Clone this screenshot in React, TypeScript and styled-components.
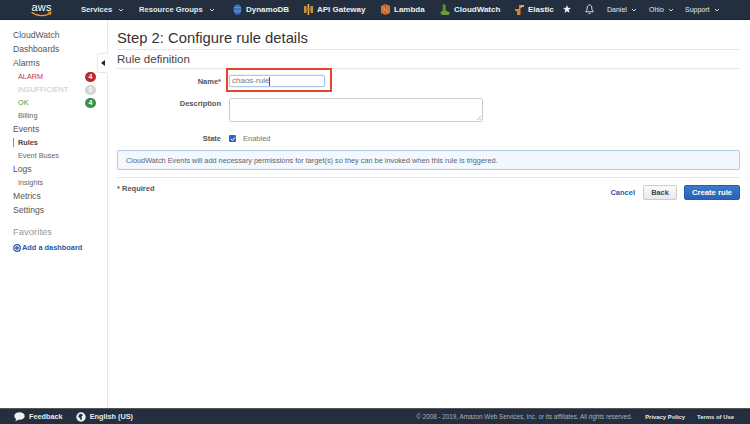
import React from "react";
import styled, { createGlobalStyle } from "styled-components";

const Global = createGlobalStyle`
  html, body { margin: 0; padding: 0; height: 100%; background: #fff; overflow: hidden; }
  body { font-family: "Liberation Sans", Arial, sans-serif; color: #444; }
  #root { height: 100%; }
`;

const Page = styled.div`
  width: 750px; height: 424px; display: flex; flex-direction: column; overflow: hidden;
`;
const Header = styled.header`
  height: 20px; flex: none; background: #232f3e; display: flex; align-items: center;
  border-bottom: 1px solid #1b2531; box-sizing: border-box; color: #eee;
`;
const LogoWrap = styled.div`width: 81px; padding-left: 31px; box-sizing: border-box; display: flex; flex: none;`;
const NavMenu = styled.span<{ $w: number }>`
  width: ${(p) => p.$w}px; flex: none; font-size: 7.6px; font-weight: 700; color: #e6e8ea;
  white-space: nowrap; display: flex; align-items: center; gap: 6px;
`;
const Shortcut = styled.span<{ $w: number }>`
  width: ${(p) => p.$w}px; flex: none; font-size: 8px; font-weight: 700; color: #eef0f2;
  white-space: nowrap; display: flex; align-items: center; gap: 4px;
`;
const UserMenu = styled.span<{ $w: number }>`
  width: ${(p) => p.$w}px; flex: none; font-size: 7px; font-weight: 400; color: #e6e8ea;
  white-space: nowrap; display: flex; align-items: center; gap: 4px;
`;
const IconSlot = styled.span<{ $w: number }>`
  width: ${(p) => p.$w}px; flex: none; display: flex; align-items: center;
`;
const Body = styled.div`flex: 1; display: flex; min-height: 0;`;
const Sidebar = styled.nav`
  width: 108px; flex: none; box-sizing: border-box; border-right: 1px solid #e8e8e8;
  padding: 8px 0 0 13px; position: relative; display: flex; flex-direction: column;
`;
const TopItem = styled.div`font-size: 8.6px; height: 14px; line-height: 14px; color: #555;`;
const SubItem = styled.div<{ $color?: string; $bold?: boolean; $mark?: boolean }>`
  font-size: 7.3px; height: 13px; line-height: 13px; padding-left: 5px; position: relative;
  color: ${(p) => p.$color || "#666"}; font-weight: ${(p) => (p.$bold ? 700 : 400)};
  display: flex; justify-content: space-between; align-items: center; padding-right: 11px;
  ${(p) => p.$mark ? `&::before { content: ""; position: absolute; left: 0; top: 2px; bottom: 2px; width: 1px; background: #e07b39; }` : ""}
`;
const Badge = styled.span<{ $bg: string }>`
  width: 11px; height: 10px; border-radius: 5px; background: ${(p) => p.$bg}; color: #fff;
  font-size: 7px; font-weight: 700; line-height: 10px; text-align: center;
`;
const Favorites = styled.div`font-size: 9.5px; color: #999; margin-top: 8px; height: 14px; line-height: 14px;`;
const AddLink = styled.div`
  font-size: 7.4px; font-weight: 700; color: #2a5ba8; margin-top: 4px; display: flex; align-items: center; gap: 1px;
`;
const Collapse = styled.div`
  position: absolute; left: 97px; top: 33px; width: 11px; height: 20px; box-sizing: border-box;
  background: #fff; border: 1px solid #e8e8e8; border-right: 1px solid #fff; border-radius: 2px 0 0 2px;
  display: flex; align-items: center; justify-content: center;
  &::after { content: ""; border: 3px solid transparent; border-right: 4px solid #222; border-left: 0; }
`;
const Main = styled.main`
  flex: 1; padding: 9px 10px 0 9px; display: flex; flex-direction: column; min-width: 0;
`;
const Title = styled.h1`
  margin: 0; font-size: 14.8px; font-weight: 400; color: #333; line-height: 18px; height: 20px;
  border-bottom: 1px solid #e6e6e6;
`;
const Section = styled.h2`
  margin: 0; font-size: 11.5px; font-weight: 400; color: #444; line-height: 18px; height: 18px;
  border-bottom: 1px solid #e6e6e6;
`;
const FormRow = styled.div<{ $h: number; $mt: number; $center?: boolean }>`
  display: flex; height: ${(p) => p.$h}px; margin-top: ${(p) => p.$mt}px;
  align-items: ${(p) => (p.$center ? "center" : "flex-start")};
`;
const Label = styled.label`
  width: 104px; flex: none; text-align: right; font-size: 7.5px; font-weight: 700; color: #555; line-height: 11px;
`;
const Field = styled.div`margin-left: 8px; position: relative; display: flex; align-items: center; gap: 7px;`;
const TextInput = styled.div`
  width: 96px; height: 12px; box-sizing: border-box; border: 1px solid #a9c9ec; border-radius: 2px;
  font-size: 8px; color: #777; line-height: 10px; padding-left: 2px; background: #fff;
  box-shadow: 0 0 2px #bcd7f3; display: flex; align-items: center;
`;
const Caret = styled.span`width: 1px; height: 9px; background: #555;`;
const Highlight = styled.div`
  position: absolute; left: -3px; top: -7px; width: 106px; height: 24px; box-sizing: border-box;
  border: 2px solid #e9422a; pointer-events: none;
`;
const TextArea = styled.div`
  width: 254px; height: 24px; box-sizing: border-box; border: 1px solid #ccc; border-radius: 2px; background: #fff; position: relative;
`;
const Grip = styled.svg`position: absolute; right: 0; bottom: 0;`;
const Check = styled.span`
  width: 7px; height: 7px; border-radius: 1px; background: #2f67c9; display: flex; align-items: center; justify-content: center;
`;
const CheckText = styled.span`font-size: 7.5px; color: #777;`;
const Info = styled.div`
  margin-top: 6px; height: 20px; box-sizing: border-box; border: 1px solid #b5c9e2; border-radius: 2px;
  background: #f2f8fe; font-size: 7.33px; color: #5a6570; padding-left: 8px; display: flex; align-items: center;
`;
const Rule = styled.div`height: 1px; background: #e6e6e6; margin-top: 7px;`;
const Actions = styled.div`display: flex; align-items: center; margin-top: 7px; height: 15px;`;
const Required = styled.span`font-size: 7.5px; font-weight: 700; color: #555; flex: 1; margin-top: -8px;`;
const CancelLink = styled.span`font-size: 7.5px; font-weight: 700; color: #2a5ba8; margin-right: 8px;`;
const BackBtn = styled.span`
  width: 34px; height: 15px; box-sizing: border-box; border: 1px solid #ccc; border-radius: 2px;
  background: linear-gradient(#fafafa, #e9e9e9); font-size: 7.4px; font-weight: 700; color: #444;
  display: flex; align-items: center; justify-content: center; margin-right: 7px;
`;
const PrimaryBtn = styled.span`
  width: 56px; height: 15px; box-sizing: border-box; border: 1px solid #2a5da8; border-radius: 2px;
  background: linear-gradient(#3c78c9, #2a62b4); font-size: 7.7px; font-weight: 700; color: #fff;
  display: flex; align-items: center; justify-content: center;
`;
const Footer = styled.footer`
  height: 16px; flex: none; background: #232f3e; border-top: 1px solid #555; box-sizing: border-box;
  display: flex; align-items: center; padding-left: 14px; color: #eee;
`;
const FootItem = styled.span<{ $mr: number }>`
  font-size: 7.3px; font-weight: 700; color: #e8eaec; display: flex; align-items: center; gap: 4px;
  margin-right: ${(p) => p.$mr}px; white-space: nowrap;
`;
const Copy = styled.span`
  margin-left: auto; font-size: 6.3px; color: #aab1b9; white-space: nowrap; margin-right: 13px;
`;
const FootLink = styled.span<{ $mr: number }>`
  font-size: 5.9px; font-weight: 700; color: #e8eaec; white-space: nowrap; margin-right: ${(p) => p.$mr}px;
`;

const Chev = () => (
  <svg width="6" height="4" viewBox="0 0 6 4"><path d="M1 1l2 2 2-2" fill="none" stroke="#d5d8dc" strokeWidth="1" /></svg>
);
const Logo = () => (
  <svg width="22" height="17" viewBox="0 0 22 17">
    <text x="0.5" y="10" fontFamily="Liberation Sans" fontSize="11" fontWeight="400" fill="#fff" textLength="20">aws</text>
    <path d="M1 11.5c5 4 13 4 18 .8" fill="none" stroke="#f39c24" strokeWidth="1.4" strokeLinecap="round" />
    <path d="M17 11.200l3.200-.3-1 3" fill="none" stroke="#f39c24" strokeWidth="1" />
  </svg>
);
const Dynamo = () => (
  <svg width="9" height="11" viewBox="0 0 9 11">
    <ellipse cx="4.5" cy="5.5" rx="4" ry="5.2" fill="#3a72b8" />
    <path d="M1 3.6h7M1 7.2h7" stroke="#7faadb" strokeWidth=".7" />
  </svg>
);
const Gateway = () => (
  <svg width="9" height="11" viewBox="0 0 9 11">
    <path d="M0 2h2.5v7H0zM6.5 2H9v7H6.5z" fill="#c9913c" />
    <path d="M3.6 0h1.6v11H3.6z" fill="#e0ad5a" />
    <path d="M2.5 4.5h4v2h-4z" fill="#b07c2e" />
  </svg>
);
const LambdaIcon = () => (
  <svg width="9" height="11" viewBox="0 0 9 11">
    <path d="M4.5 0L9 2v7l-4.5 2L0 9V2z" fill="#d2732f" />
    <path d="M4.5 0v11" stroke="#a3551e" strokeWidth=".8" />
    <path d="M3 3.5l3 4.5" stroke="#f2b27f" strokeWidth=".8" />
  </svg>
);
const CloudIcon = () => (
  <svg width="10" height="11" viewBox="0 0 10 11">
    <path d="M3 0l2.500 1V6.500L10 8.500 8.500 11H2L0 8.500l2.500-1.500z" fill="#6c9a3a" />
    <path d="M3.200 0v7" stroke="#4f7a28" strokeWidth="1" />
  </svg>
);
const ElasticIcon = () => (
  <svg width="9" height="12" viewBox="0 0 9 12">
    <path d="M4 1h3v3H5.5v7H2V7H0V5h4z" fill="#d9822b" />
    <path d="M5.5 1H9v2H5.5z" fill="#f0a24d" />
  </svg>
);
const Pin = () => (
  <svg width="8" height="9" viewBox="0 0 8 9">
    <path d="M4 0l1 2.700 3 .2-2.300 1.800.8 3L4 6.200 1.500 7.700l.8-3L0 2.900l3-.2z" fill="#eef0f2" />
  </svg>
);
const Bell = () => (
  <svg width="9" height="11" viewBox="0 0 9 11">
    <path d="M4.500 1C2.800 1 2.200 2.400 2.200 4c0 2-.9 3-1.500 3.800h7.600C7.700 7 6.800 6 6.800 4c0-1.600-.6-3-2.300-3z" fill="none" stroke="#eef0f2" strokeWidth=".9" />
    <path d="M3.400 9c.2.800 2 .8 2.200 0" fill="none" stroke="#eef0f2" strokeWidth=".9" />
  </svg>
);
const Speech = () => (
  <svg width="11" height="10" viewBox="0 0 11 10">
    <ellipse cx="5.500" cy="4" rx="5.200" ry="3.800" fill="#eef0f2" />
    <path d="M2 6.500L1.500 9.500 5 7z" fill="#eef0f2" />
  </svg>
);
const Globe = () => (
  <svg width="10" height="10" viewBox="0 0 10 10">
    <circle cx="5" cy="5" r="4.700" fill="#eef0f2" />
    <path d="M3 2.500l2.500-.8 1.300 1.500-1.500 1.700.8 1.800-1.300 1.500-.8-2.200L2.300 5z" fill="#232f3e" />
  </svg>
);
const PlusCircle = () => (
  <svg width="8" height="8" viewBox="0 0 8 8">
    <circle cx="4" cy="4" r="3.300" fill="none" stroke="#2a5ba8" strokeWidth="1.300" />
    <path d="M4 2v4M2 4h4" stroke="#2a5ba8" strokeWidth="1.300" />
  </svg>
);

export default function App() {
  return (
    <Page>
      <Global />
      <Header>
        <LogoWrap><Logo /></LogoWrap>
        <NavMenu $w={58}>Services <Chev /></NavMenu>
        <NavMenu $w={94}>Resource Groups <Chev /></NavMenu>
        <Shortcut $w={71}><Dynamo />DynamoDB</Shortcut>
        <Shortcut $w={77}><Gateway />API Gateway</Shortcut>
        <Shortcut $w={59}><LambdaIcon />Lambda</Shortcut>
        <Shortcut $w={75}><CloudIcon />CloudWatch</Shortcut>
        <Shortcut $w={48}><ElasticIcon />Elastic</Shortcut>
        <IconSlot $w={22}><Pin /></IconSlot>
        <IconSlot $w={22}><Bell /></IconSlot>
        <UserMenu $w={42}>Daniel <Chev /></UserMenu>
        <UserMenu $w={36}>Ohio <Chev /></UserMenu>
        <UserMenu $w={40}>Support <Chev /></UserMenu>
      </Header>
      <Body>
        <Sidebar>
          <TopItem>CloudWatch</TopItem>
          <TopItem>Dashboards</TopItem>
          <TopItem>Alarms</TopItem>
          <SubItem $color="#c9393a">ALARM<Badge $bg="#b92c25">4</Badge></SubItem>
          <SubItem $color="#c8c8c8">INSUFFICIENT<Badge $bg="#d5d5d5">0</Badge></SubItem>
          <SubItem $color="#4a9a45">OK<Badge $bg="#3f9142">4</Badge></SubItem>
          <SubItem>Billing</SubItem>
          <TopItem>Events</TopItem>
          <SubItem $bold $mark $color="#444">Rules</SubItem>
          <SubItem>Event Buses</SubItem>
          <TopItem>Logs</TopItem>
          <SubItem>Insights</SubItem>
          <TopItem>Metrics</TopItem>
          <TopItem>Settings</TopItem>
          <Favorites>Favorites</Favorites>
          <AddLink><PlusCircle />Add a dashboard</AddLink>
          <Collapse />
        </Sidebar>
        <Main>
          <Title>Step 2: Configure rule details</Title>
          <Section>Rule definition</Section>
          <FormRow $h={12} $mt={6} $center>
            <Label>Name*</Label>
            <Field>
              <TextInput>chaos-rule<Caret /></TextInput>
              <Highlight />
            </Field>
          </FormRow>
          <FormRow $h={24} $mt={11}>
            <Label>Description</Label>
            <Field>
              <TextArea>
                <Grip width="6" height="6" viewBox="0 0 6 6"><path d="M1 5l4-4M3.500 5L5 3.500" stroke="#888" strokeWidth=".6" /></Grip>
              </TextArea>
            </Field>
          </FormRow>
          <FormRow $h={11} $mt={11} $center>
            <Label>State</Label>
            <Field>
              <Check><svg width="6" height="6" viewBox="0 0 6 6"><path d="M1 3l1.500 1.500L5 1.500" fill="none" stroke="#fff" strokeWidth="1" /></svg></Check>
              <CheckText>Enabled</CheckText>
            </Field>
          </FormRow>
          <Info>CloudWatch Events will add necessary permissions for target(s) so they can be invoked when this rule is triggered.</Info>
          <Rule />
          <Actions>
            <Required>* Required</Required>
            <CancelLink>Cancel</CancelLink>
            <BackBtn>Back</BackBtn>
            <PrimaryBtn>Create rule</PrimaryBtn>
          </Actions>
        </Main>
      </Body>
      <Footer>
        <FootItem $mr={13}><Speech />Feedback</FootItem>
        <FootItem $mr={0}><Globe />English (US)</FootItem>
        <Copy>© 2008 - 2019, Amazon Web Services, Inc. or its affiliates. All rights reserved.</Copy>
        <FootLink $mr={12}>Privacy Policy</FootLink>
        <FootLink $mr={16}>Terms of Use</FootLink>
      </Footer>
    </Page>
  );
}
